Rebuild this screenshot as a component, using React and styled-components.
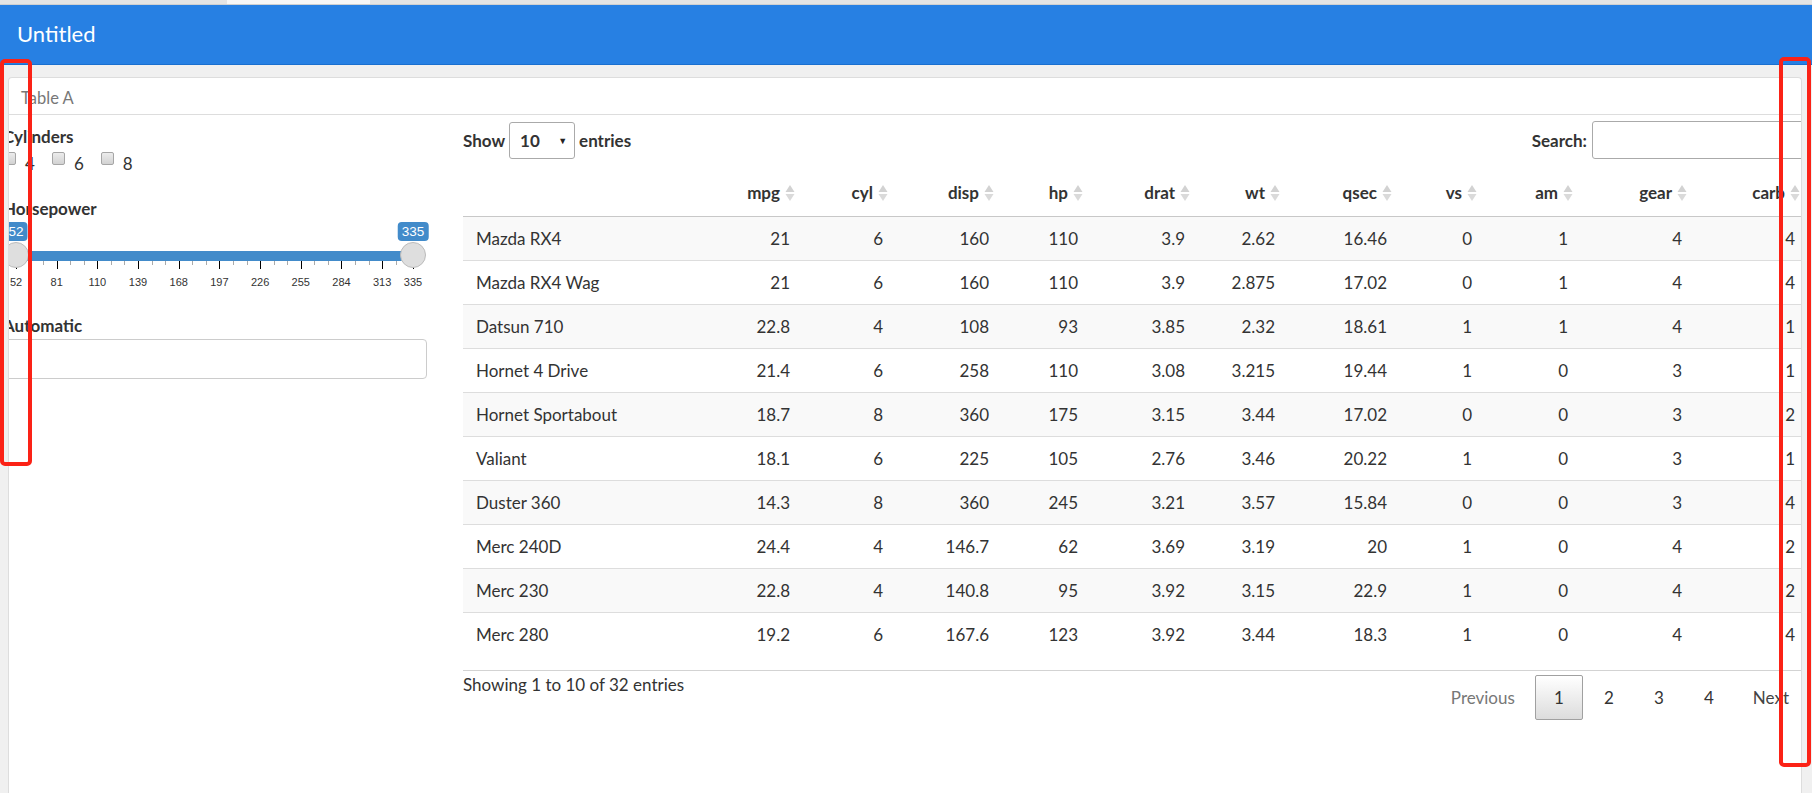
import React from "react";
import styled, { createGlobalStyle } from "styled-components";

const GlobalStyle = createGlobalStyle`
    html, body {
        margin: 0;
        padding: 0;
        background: #f0f0f0;
        overflow: hidden;
    }
    body {
        font-family: Lato, "Noto Sans", sans-serif;
        font-size: 17px;
        color: #333;
    }
    * { box-sizing: border-box; }
`;

// dados (mtcars)
const colunas = [
    { key: "name", label: "", w: 249 },
    { key: "mpg", label: "mpg", w: 90 },
    { key: "cyl", label: "cyl", w: 93 },
    { key: "disp", label: "disp", w: 106 },
    { key: "hp", label: "hp", w: 89 },
    { key: "drat", label: "drat", w: 107 },
    { key: "wt", label: "wt", w: 90 },
    { key: "qsec", label: "qsec", w: 112 },
    { key: "vs", label: "vs", w: 85 },
    { key: "am", label: "am", w: 96 },
    { key: "gear", label: "gear", w: 114 },
    { key: "carb", label: "carb", w: 113 },
];

const carros = [
    ["Mazda RX4", "21", "6", "160", "110", "3.9", "2.62", "16.46", "0", "1", "4", "4"],
    ["Mazda RX4 Wag", "21", "6", "160", "110", "3.9", "2.875", "17.02", "0", "1", "4", "4"],
    ["Datsun 710", "22.8", "4", "108", "93", "3.85", "2.32", "18.61", "1", "1", "4", "1"],
    ["Hornet 4 Drive", "21.4", "6", "258", "110", "3.08", "3.215", "19.44", "1", "0", "3", "1"],
    ["Hornet Sportabout", "18.7", "8", "360", "175", "3.15", "3.44", "17.02", "0", "0", "3", "2"],
    ["Valiant", "18.1", "6", "225", "105", "2.76", "3.46", "20.22", "1", "0", "3", "1"],
    ["Duster 360", "14.3", "8", "360", "245", "3.21", "3.57", "15.84", "0", "0", "3", "4"],
    ["Merc 240D", "24.4", "4", "146.7", "62", "3.69", "3.19", "20", "1", "0", "4", "2"],
    ["Merc 230", "22.8", "4", "140.8", "95", "3.92", "3.15", "22.9", "1", "0", "4", "2"],
    ["Merc 280", "19.2", "6", "167.6", "123", "3.92", "3.44", "18.3", "1", "0", "4", "4"],
];

const Pagina = styled.div`
    position: relative;
    display: flex;
    flex-direction: column;
    height: 100vh;
    overflow: hidden;
`;

const FaixaTopo = styled.div`
    height: 5px;
    background: #e4e4e4;
    border-bottom: 1px solid #d0d0d0;
    display: flex;
`;

const AbaNavegador = styled.div`
    margin-left: 227px;
    width: 143px;
    background: #f7f7f7;
`;

const Navbar = styled.header`
    height: 60px;
    flex-shrink: 0;
    background: #2780e3;
    border-bottom: 1px solid #1a6fcf;
    display: flex;
    align-items: center;
    padding: 0 0 2px 17px;
    color: #fff;
    font-size: 22px;
`;

const Corpo = styled.div`
    flex: 1;
    padding: 12px 10px 0 8px;
    min-height: 0;
`;

const Painel = styled.section`
    height: 100%;
    background: #fff;
    border: 1px solid #ddd;
    border-bottom: none;
    border-radius: 4px 4px 0 0;
    overflow: hidden;
`;

const BarraAbas = styled.div`
    height: 37px;
    border-bottom: 1px solid #ddd;
    display: flex;
    align-items: center;
    padding: 4px 0 0 12px;
    color: #777;
    font-size: 16.5px;
`;

const Conteudo = styled.div`
    display: flex;
    gap: 36px;
    margin-left: -6px;
`;

const Lateral = styled.aside`
    width: 424px;
    flex-shrink: 0;
    display: flex;
    flex-direction: column;
`;

const Rotulo = styled.label`
    display: block;
    font-weight: 700;
    line-height: 22px;
    margin-top: ${(p) => p.$top}px;
`;

const LinhaCheck = styled.div`
    display: flex;
    margin-top: 3px;
    height: 26px;
`;

const Opcao = styled.div`
    display: flex;
    align-items: flex-start;
    margin-right: 17px;
    line-height: 26px;
`;

const Caixa = styled.span`
    width: 13px;
    height: 13px;
    margin: 1px 9px 0 0;
    border: 1px solid #a6a6a6;
    border-radius: 2px;
    background: linear-gradient(#ececec, #d2d2d2);
`;

const Slider = styled.div`
    position: relative;
    height: 72px;
    font-family: "Liberation Sans", Arial, sans-serif;
`;

const Trilho = styled.div`
    position: absolute;
    left: 13px;
    width: 397px;
    top: 31px;
    height: 10px;
    background: #428bca;
`;

const Marca = styled.div`
    position: absolute;
    top: 41px;
    width: 1px;
    height: ${(p) => (p.$maior ? 8 : 4)}px;
    background: ${(p) => (p.$maior ? "#000" : "#aaa")};
`;

const Numero = styled.div`
    position: absolute;
    top: 55px;
    transform: translateX(-50%);
    font-size: 11px;
    line-height: 14px;
    color: #333;
`;

const Balao = styled.div`
    position: absolute;
    top: 2px;
    height: 19px;
    transform: translateX(-50%);
    padding: 0 4px;
    background: #428bca;
    border-radius: 4px;
    color: #fff;
    font-size: 13.5px;
    line-height: 19px;
`;

const Alca = styled.div`
    position: absolute;
    top: 22px;
    width: 26px;
    height: 26px;
    margin-left: -13px;
    border-radius: 50%;
    background: #dedede;
    border: 1px solid #bbb;
`;

const Entrada = styled.div`
    height: 40px;
    margin-top: 2px;
    border: 1px solid #ccc;
    border-radius: 4px;
`;

const Principal = styled.main`
    width: 1344px;
    flex-shrink: 0;
    padding-top: 6px;
`;

const Controles = styled.div`
    display: flex;
    justify-content: space-between;
    align-items: center;
    height: 38px;
    font-weight: 700;
`;

const Grupo = styled.div`
    display: flex;
    align-items: center;
    gap: ${(p) => p.$gap}px;
`;

const Seletor = styled.div`
    width: 66px;
    height: 37px;
    border: 1px solid #aaa;
    border-radius: 3px;
    display: flex;
    align-items: center;
    justify-content: space-between;
    padding: 0 7px 0 10px;

    span {
        font-size: 9px;
        color: #222;
    }
`;

const Busca = styled.div`
    width: 215px;
    height: 38px;
    border: 1px solid #aaa;
    border-radius: 3px;
`;

const EnvoltorioTabela = styled.div`
    margin-top: 10px;
    padding-bottom: 14px;
    border-bottom: 1px solid #d3d3d3;
`;

const Tabela = styled.table`
    width: 1344px;
    table-layout: fixed;
    border-collapse: separate;
    border-spacing: 0;
`;

const Th = styled.th`
    height: 47px;
    padding: 0 7px 0 0;
    font-weight: 700;

    div {
        display: flex;
        justify-content: flex-end;
        align-items: center;
        gap: 5px;
    }
`;

const Tr = styled.tr`
    background: ${(p) => (p.$impar ? "#f9f9f9" : "#fff")};

    td {
        border-top: 1px solid ${(p) => (p.$primeira ? "#c8c8c8" : "#ddd")};
    }
`;

const Td = styled.td`
    height: 44px;
    padding: 0 12px 0 13px;
    text-align: ${(p) => (p.$nome ? "left" : "right")};
    white-space: nowrap;
`;

const Rodape = styled.div`
    display: flex;
    justify-content: space-between;
    align-items: flex-start;
`;

const Info = styled.div`
    padding-top: 3px;
    line-height: 22px;
`;

const Paginacao = styled.div`
    display: flex;
    margin-top: 4px;
`;

const BotaoPagina = styled.div`
    height: 45px;
    min-width: 48px;
    margin-left: 2px;
    padding: 0 17px;
    display: flex;
    align-items: center;
    justify-content: center;
    border: 1px solid ${(p) => (p.$atual ? "#a0a0a0" : "transparent")};
    border-radius: 2px;
    background: ${(p) => (p.$atual ? "linear-gradient(#fff, #dcdcdc)" : "transparent")};
    color: ${(p) => p.$cor || "#333"};
`;

const Destaque = styled.div`
    position: absolute;
    left: ${(p) => p.$x}px;
    top: ${(p) => p.$y}px;
    width: ${(p) => p.$w}px;
    height: ${(p) => p.$h}px;
    border: 4px solid #fb2216;
    border-radius: 5px;
    pointer-events: none;
`;

function IconeOrdem() {
    return (
        <svg width="10" height="18" viewBox="0 0 10 18">
            <polygon points="0.5,8 5,1 9.5,8" fill="#d2d2d2" />
            <polygon points="0.5,10 5,17 9.5,10" fill="#dadada" />
        </svg>
    );
}

const MIN = 52;
const MAX = 335;
const posicao = (v) => 13 + ((v - MIN) / (MAX - MIN)) * 397;

function SliderCavalos() {
    const maiores = [52, 81, 110, 139, 168, 197, 226, 255, 284, 313];
    const marcas = [];
    maiores.forEach((v) => {
        marcas.push({ v, maior: true });
        marcas.push({ v: v + 29 / 3, maior: false });
        marcas.push({ v: v + 58 / 3, maior: false });
    });
    marcas.push({ v: 335, maior: true });

    return (
        <Slider>
            <Trilho />
            {marcas.map((m, i) => (
                <Marca key={i} $maior={m.maior} style={{ left: posicao(m.v) }} />
            ))}
            {[...maiores, 335].map((v) => (
                <Numero key={v} style={{ left: posicao(v) }}>{v}</Numero>
            ))}
            <Alca style={{ left: posicao(52) }} />
            <Alca style={{ left: posicao(335) }} />
            <Balao style={{ left: posicao(52) }}>52</Balao>
            <Balao style={{ left: posicao(335) }}>335</Balao>
        </Slider>
    );
}

function App() {
    return (
        <Pagina>
            <GlobalStyle />
            <FaixaTopo>
                <AbaNavegador />
            </FaixaTopo>
            <Navbar>Untitled</Navbar>
            <Corpo>
                <Painel>
                    <BarraAbas>Table A</BarraAbas>
                    <Conteudo>
                        <Lateral>
                            <Rotulo $top={11}>Cylinders</Rotulo>
                            <LinhaCheck>
                                {["4", "6", "8"].map((c) => (
                                    <Opcao key={c}>
                                        <Caixa />
                                        {c}
                                    </Opcao>
                                ))}
                            </LinhaCheck>
                            <Rotulo $top={21}>Horsepower</Rotulo>
                            <SliderCavalos />
                            <Rotulo $top={23}>Automatic</Rotulo>
                            <Entrada />
                        </Lateral>

                        <Principal>
                            <Controles>
                                <Grupo $gap={4}>
                                    Show
                                    <Seletor>
                                        10<span>▼</span>
                                    </Seletor>
                                    entries
                                </Grupo>
                                <Grupo $gap={5}>
                                    Search:
                                    <Busca />
                                </Grupo>
                            </Controles>

                            <EnvoltorioTabela>
                                <Tabela>
                                    <colgroup>
                                        {colunas.map((c) => (
                                            <col key={c.key} style={{ width: c.w }} />
                                        ))}
                                    </colgroup>
                                    <thead>
                                        <tr>
                                            {colunas.map((c) => (
                                                <Th key={c.key}>
                                                    {c.label && (
                                                        <div>
                                                            {c.label}
                                                            <IconeOrdem />
                                                        </div>
                                                    )}
                                                </Th>
                                            ))}
                                        </tr>
                                    </thead>
                                    <tbody>
                                        {carros.map((linha, i) => (
                                            <Tr key={linha[0]} $impar={i % 2 === 0} $primeira={i === 0}>
                                                {linha.map((valor, j) => (
                                                    <Td key={j} $nome={j === 0}>{valor}</Td>
                                                ))}
                                            </Tr>
                                        ))}
                                    </tbody>
                                </Tabela>
                            </EnvoltorioTabela>

                            <Rodape>
                                <Info>Showing 1 to 10 of 32 entries</Info>
                                <Paginacao>
                                    <BotaoPagina $cor="#777">Previous</BotaoPagina>
                                    <BotaoPagina $atual>1</BotaoPagina>
                                    <BotaoPagina>2</BotaoPagina>
                                    <BotaoPagina>3</BotaoPagina>
                                    <BotaoPagina>4</BotaoPagina>
                                    <BotaoPagina $cor="#444">Next</BotaoPagina>
                                </Paginacao>
                            </Rodape>
                        </Principal>
                    </Conteudo>
                </Painel>
            </Corpo>

            <Destaque $x={0} $y={59} $w={32} $h={407} />
            <Destaque $x={1779} $y={57} $w={32} $h={710} />
        </Pagina>
    );
}

export default App;
